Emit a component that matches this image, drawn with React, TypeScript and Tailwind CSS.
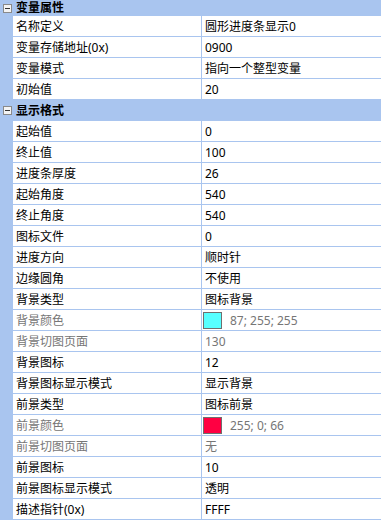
import React from "react";

type Row = {
  label: string;
  value: string;
  muted?: boolean;
  swatch?: string;
};

const varRows: Row[] = [
  { label: "名称定义", value: "圆形进度条显示0" },
  { label: "变量存储地址(0x)", value: "0900" },
  { label: "变量模式", value: "指向一个整型变量" },
  { label: "初始值", value: "20" },
];

const fmtRows: Row[] = [
  { label: "起始值", value: "0" },
  { label: "终止值", value: "100" },
  { label: "进度条厚度", value: "26" },
  { label: "起始角度", value: "540" },
  { label: "终止角度", value: "540" },
  { label: "图标文件", value: "0" },
  { label: "进度方向", value: "顺时针" },
  { label: "边缘圆角", value: "不使用" },
  { label: "背景类型", value: "图标背景" },
  { label: "背景颜色", value: "87; 255; 255", muted: true, swatch: "#57ffff" },
  { label: "背景切图页面", value: "130", muted: true },
  { label: "背景图标", value: "12" },
  { label: "背景图标显示模式", value: "显示背景" },
  { label: "前景类型", value: "图标前景" },
  { label: "前景颜色", value: "255; 0; 66", muted: true, swatch: "#ff0042" },
  { label: "前景切图页面", value: "无", muted: true },
  { label: "前景图标", value: "10" },
  { label: "前景图标显示模式", value: "透明" },
  { label: "描述指针(0x)", value: "FFFF" },
];

function Minus() {
  return (
    <div className="flex h-[9px] w-[9px] items-center justify-center border border-[#8a8a8a] bg-[#f4f4f4]">
      <div className="h-px w-[5px] bg-[#333]" />
    </div>
  );
}

function Header({ title, first }: { title: string; first?: boolean }) {
  return (
    <div
      className={`flex items-center bg-[#a9c5ef] ${first ? "h-[16px]" : "h-[21px]"}`}
    >
      <div className="flex w-[13px] shrink-0 justify-center pl-[2px]">
        <Minus />
      </div>
      <span className="pl-[3px] font-bold text-black">{title}</span>
    </div>
  );
}

function PropRow({ row }: { row: Row }) {
  const tone = row.muted ? "text-[#767676]" : "text-black";
  return (
    <div className="flex h-[21px] border-b border-[#a9c5ef]">
      <div className="w-[13px] shrink-0 bg-[#a9c5ef]" />
      <div className={`flex w-[189px] shrink-0 items-center border-r border-[#a9c5ef] bg-white pl-[3px] pt-px ${tone}`}>
        {row.label}
      </div>
      <div className={`flex flex-1 items-center bg-white pl-[3px] pt-px ${tone}`}>
        {row.swatch && (
          <span
            className="ml-[-2px] mr-[8px] h-[17px] w-[19px] border border-[#6f6f6f]"
            style={{ backgroundColor: row.swatch }}
          />
        )}
        {row.value}
      </div>
    </div>
  );
}

export default function App() {
  return (
    <div className="h-[522px] w-[381px] overflow-hidden bg-white font-['Noto_Sans','Noto_Sans_CJK_SC',sans-serif] text-[12px] leading-none">
      <Header title="变量属性" first />
      {varRows.map((r) => (
        <PropRow key={r.label} row={r} />
      ))}
      <Header title="显示格式" />
      {fmtRows.map((r) => (
        <PropRow key={r.label} row={r} />
      ))}
    </div>
  );
}
